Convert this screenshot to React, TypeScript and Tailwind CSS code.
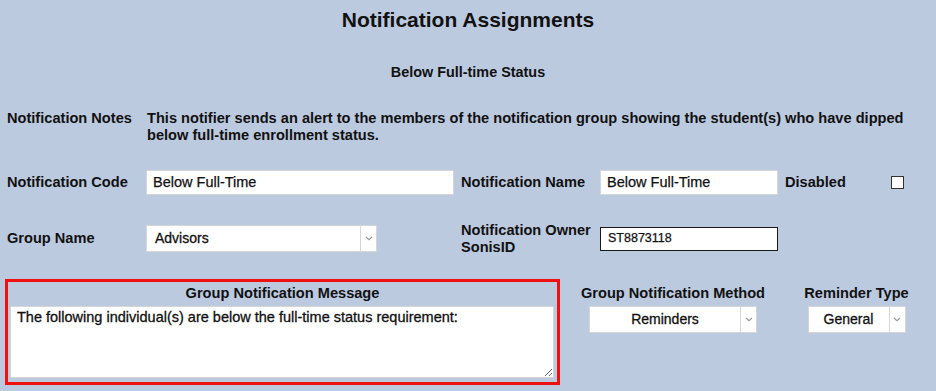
const Chevron = () => (
  <svg width="8" height="5" viewBox="0 0 8 5" className="text-[#9a9a9a]">
    <path d="M1 1 L4 3.6 L7 1" fill="none" stroke="currentColor" strokeWidth="1.2" />
  </svg>
)

const Select = ({ value, width, center }: { value: string; width: string; center?: boolean }) => (
  <div className={`${width} h-[27px] flex bg-white border border-[#d6d6d6] font-normal`}>
    <div
      className={`flex-1 flex items-center text-[14px] text-[#111] [-webkit-text-stroke:0.3px_#111] ${center ? 'justify-center' : 'pl-[8px]'}`}
    >
      {value}
    </div>
    <div className="w-[16px] border-l border-[#d6d6d6] flex items-center justify-center">
      <Chevron />
    </div>
  </div>
)

const App = () => {
  return (
    <div className="w-[936px] h-[391px] bg-[#bccae0] text-[#111] font-['Liberation_Sans',Arial,sans-serif] overflow-hidden">
      <h1 className="pt-[8px] text-center text-[21px] leading-[24px] font-bold">Notification Assignments</h1>

      <div className="mt-[32px] text-center text-[14.4px] leading-[16px] font-bold">Below Full-time Status</div>

      <div className="mt-[30px] flex pl-[7px] text-[14.6px] leading-[17px] font-bold">
        <div className="w-[140px] shrink-0">Notification Notes</div>
        <div className="w-[785px]">
          This notifier sends an alert to the members of the notification group showing the student(s) who have dipped
          below full-time enrollment status.
        </div>
      </div>

      <div className="mt-[26px] h-[25px] flex items-center pl-[7px] text-[14.6px] font-bold">
        <div className="w-[139px]">Notification Code</div>
        <div className="w-[308px] h-[25px] bg-white border border-[#d6d6d6] flex items-center pl-[6px] text-[14.5px] font-normal [-webkit-text-stroke:0.25px_#111]">
          Below Full-Time
        </div>
        <div className="ml-[7px] w-[139px]">Notification Name</div>
        <div className="w-[178px] h-[25px] bg-white border border-[#d6d6d6] flex items-center pl-[6px] text-[14.5px] font-normal [-webkit-text-stroke:0.25px_#111]">
          Below Full-Time
        </div>
        <div className="ml-[7px] w-[106px]">Disabled</div>
        <div className="w-[13px] h-[13px] bg-white border-[1.5px] border-[#333]"></div>
      </div>

      <div className="mt-[30px] h-[27px] flex items-center pl-[7px] text-[14.6px] font-bold">
        <div className="w-[139px]">Group Name</div>
        <Select value="Advisors" width="w-[231px]" />
        <div className="ml-[84px] w-[139px] leading-[17px]">
          Notification Owner
          <br />
          SonisID
        </div>
        <div className="w-[178px] h-[24px] bg-white border border-[#1a1a1a] flex items-center pl-[7px] text-[12.5px] font-normal [-webkit-text-stroke:0.25px_#111]">
          ST8873118
        </div>
      </div>

      <div className="mt-[27px] flex items-start pl-[5px] text-[14.6px] font-bold">
        <div className="w-[555px] h-[106px] border-[3px] border-[#f01010] flex flex-col">
          <div className="pt-[3px] text-center leading-[16px]">Group Notification Message</div>
          <textarea
            className="mt-[5px] ml-[2px] w-[544px] h-[72px] bg-white border border-[#d6d6d6] px-[6px] pt-[2px] text-[14.5px] leading-[17px] font-normal outline-none [-webkit-text-stroke:0.3px_#111]"
            defaultValue="The following individual(s) are below the full-time status requirement:"
          />
        </div>

        <div className="ml-[20px] w-[186px] flex flex-col items-center pt-[6px]">
          <div className="leading-[16px] whitespace-nowrap">Group Notification Method</div>
          <div className="mt-[5px]">
            <Select value="Reminders" width="w-[168px]" center />
          </div>
        </div>

        <div className="ml-[39px] w-[103px] flex flex-col items-center pt-[6px]">
          <div className="leading-[16px] whitespace-nowrap">Reminder Type</div>
          <div className="mt-[5px]">
            <Select value="General" width="w-[98px]" center />
          </div>
        </div>
      </div>
    </div>
  )
}

export default App
